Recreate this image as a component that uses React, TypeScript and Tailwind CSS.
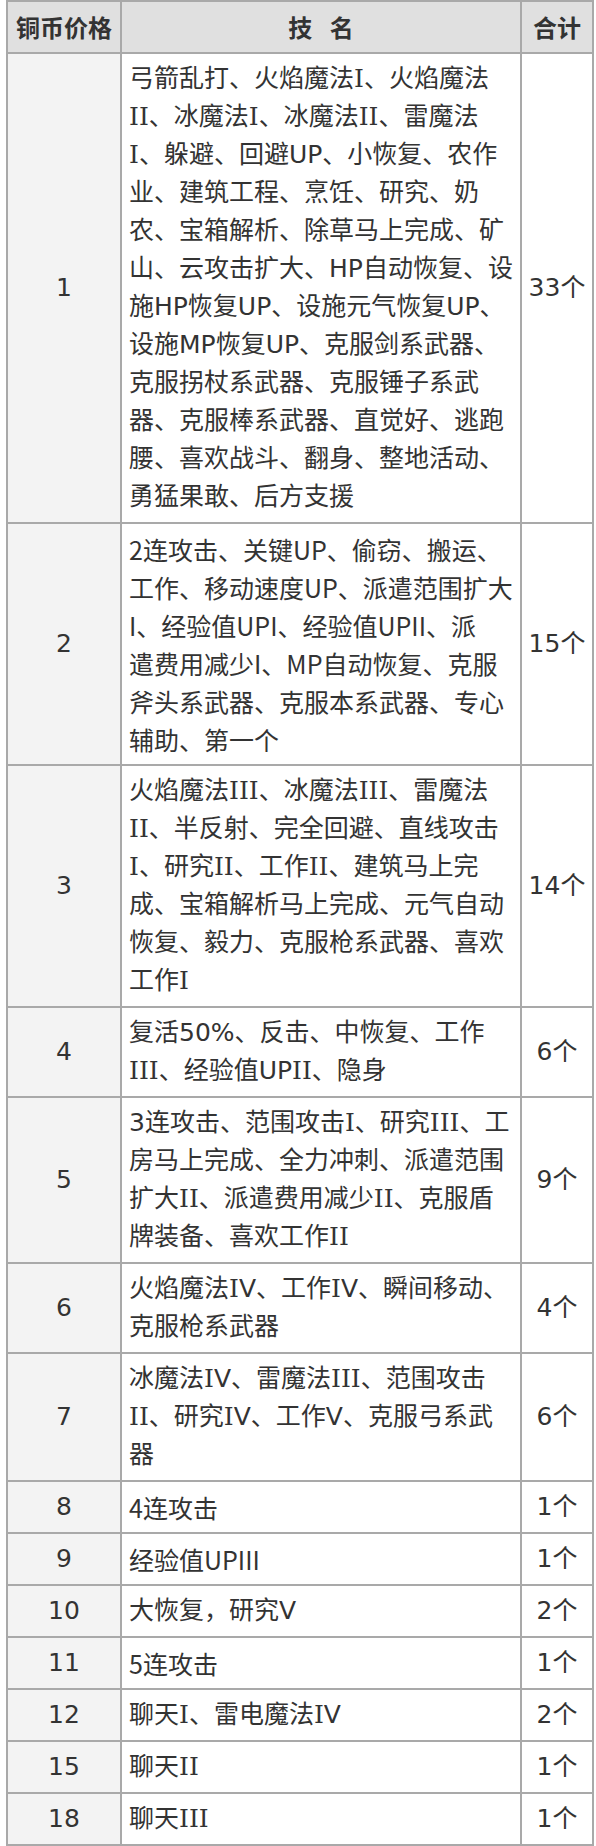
type Row = {
  price: string;
  lines: string[];
  count: string;
  yahei?: boolean;
};

const rows: Row[] = [
  {
    price: '1',
    count: '33个',
    lines: [
      '弓箭乱打、火焰魔法I、火焰魔法',
      'II、冰魔法I、冰魔法II、雷魔法',
      'I、躲避、回避UP、小恢复、农作',
      '业、建筑工程、烹饪、研究、奶',
      '农、宝箱解析、除草马上完成、矿',
      '山、云攻击扩大、HP自动恢复、设',
      '施HP恢复UP、设施元气恢复UP、',
      '设施MP恢复UP、克服剑系武器、',
      '克服拐杖系武器、克服锤子系武',
      '器、克服棒系武器、直觉好、逃跑',
      '腰、喜欢战斗、翻身、整地活动、',
      '勇猛果敢、后方支援',
    ],
  },
  {
    price: '2',
    count: '15个',
    yahei: true,
    lines: [
      '2连攻击、关键UP、偷窃、搬运、',
      '工作、移动速度UP、派遣范围扩大',
      'I、经验值UPI、经验值UPII、派',
      '遣费用减少I、MP自动恢复、克服',
      '斧头系武器、克服本系武器、专心',
      '辅助、第一个',
    ],
  },
  {
    price: '3',
    count: '14个',
    lines: [
      '火焰魔法III、冰魔法III、雷魔法',
      'II、半反射、完全回避、直线攻击',
      'I、研究II、工作II、建筑马上完',
      '成、宝箱解析马上完成、元气自动',
      '恢复、毅力、克服枪系武器、喜欢',
      '工作I',
    ],
  },
  {
    price: '4',
    count: '6个',
    lines: ['复活50%、反击、中恢复、工作', 'III、经验值UPII、隐身'],
  },
  {
    price: '5',
    count: '9个',
    lines: [
      '3连攻击、范围攻击I、研究III、工',
      '房马上完成、全力冲刺、派遣范围',
      '扩大II、派遣费用减少II、克服盾',
      '牌装备、喜欢工作II',
    ],
  },
  {
    price: '6',
    count: '4个',
    lines: ['火焰魔法IV、工作IV、瞬间移动、', '克服枪系武器'],
  },
  {
    price: '7',
    count: '6个',
    lines: ['冰魔法IV、雷魔法III、范围攻击', 'II、研究IV、工作V、克服弓系武', '器'],
  },
  { price: '8', count: '1个', yahei: true, lines: ['4连攻击'] },
  { price: '9', count: '1个', yahei: true, lines: ['经验值UPIII'] },
  { price: '10', count: '2个', lines: ['大恢复，研究V'] },
  { price: '11', count: '1个', yahei: true, lines: ['5连攻击'] },
  { price: '12', count: '2个', lines: ['聊天I、雷电魔法IV'] },
  { price: '15', count: '1个', lines: ['聊天II'] },
  { price: '18', count: '1个', lines: ['聊天III'] },
];

// roman numeral I's in the reference have serifs (Verdana style)
function renderLine(text: string, yahei?: boolean) {
  if (yahei) return text;
  return text.split(/(I+)/).map((part, i) =>
    /^I+$/.test(part) ? (
      <span key={i} className="font-['DejaVu_Serif',serif]">
        {part}
      </span>
    ) : (
      part
    )
  );
}

export default function App() {
  return (
    <div className="w-[596px] h-[1846px] bg-white pl-[6px] font-['DejaVu_Sans','Noto_Sans_CJK_SC',sans-serif] text-[#333] text-[25px] leading-[38px]">
      <table className="table-fixed border-collapse w-[586px]">
        <colgroup>
          <col className="w-[114px]" />
          <col className="w-[400px]" />
          <col className="w-[72px]" />
        </colgroup>
        <thead>
          <tr className="bg-[#e0e0e0]">
            <th className="border-2 border-[#a9a9a9] py-[6px] text-center font-bold text-[24px] font-['Noto_Sans_CJK_SC',sans-serif]">
              铜币价格
            </th>
            <th className="border-2 border-[#a9a9a9] py-[6px] text-center font-bold text-[24px] font-['Noto_Sans_CJK_SC',sans-serif] [word-spacing:12px]">
              技 名
            </th>
            <th className="border-2 border-[#a9a9a9] py-[6px] text-center font-bold text-[24px] font-['Noto_Sans_CJK_SC',sans-serif]">
              合计
            </th>
          </tr>
        </thead>
        <tbody>
          {rows.map((row) => (
            <tr key={row.price}>
              <td className="border-2 border-[#a9a9a9] bg-[#f3f3f3] py-[6px] text-center align-middle">
                {row.price}
              </td>
              <td
                className={`border-2 border-[#a9a9a9] bg-white py-[6px] pl-[7px] pr-1 text-left align-middle ${
                  row.yahei ? "font-['Noto_Sans_CJK_SC',sans-serif]" : ''
                }`}
              >
                {row.lines.map((line, i) => (
                  <div key={i} className="whitespace-nowrap">
                    {renderLine(line, row.yahei)}
                  </div>
                ))}
              </td>
              <td className="border-2 border-[#a9a9a9] bg-white py-[6px] text-center align-middle whitespace-nowrap">
                {row.count}
              </td>
            </tr>
          ))}
        </tbody>
      </table>
    </div>
  );
}
